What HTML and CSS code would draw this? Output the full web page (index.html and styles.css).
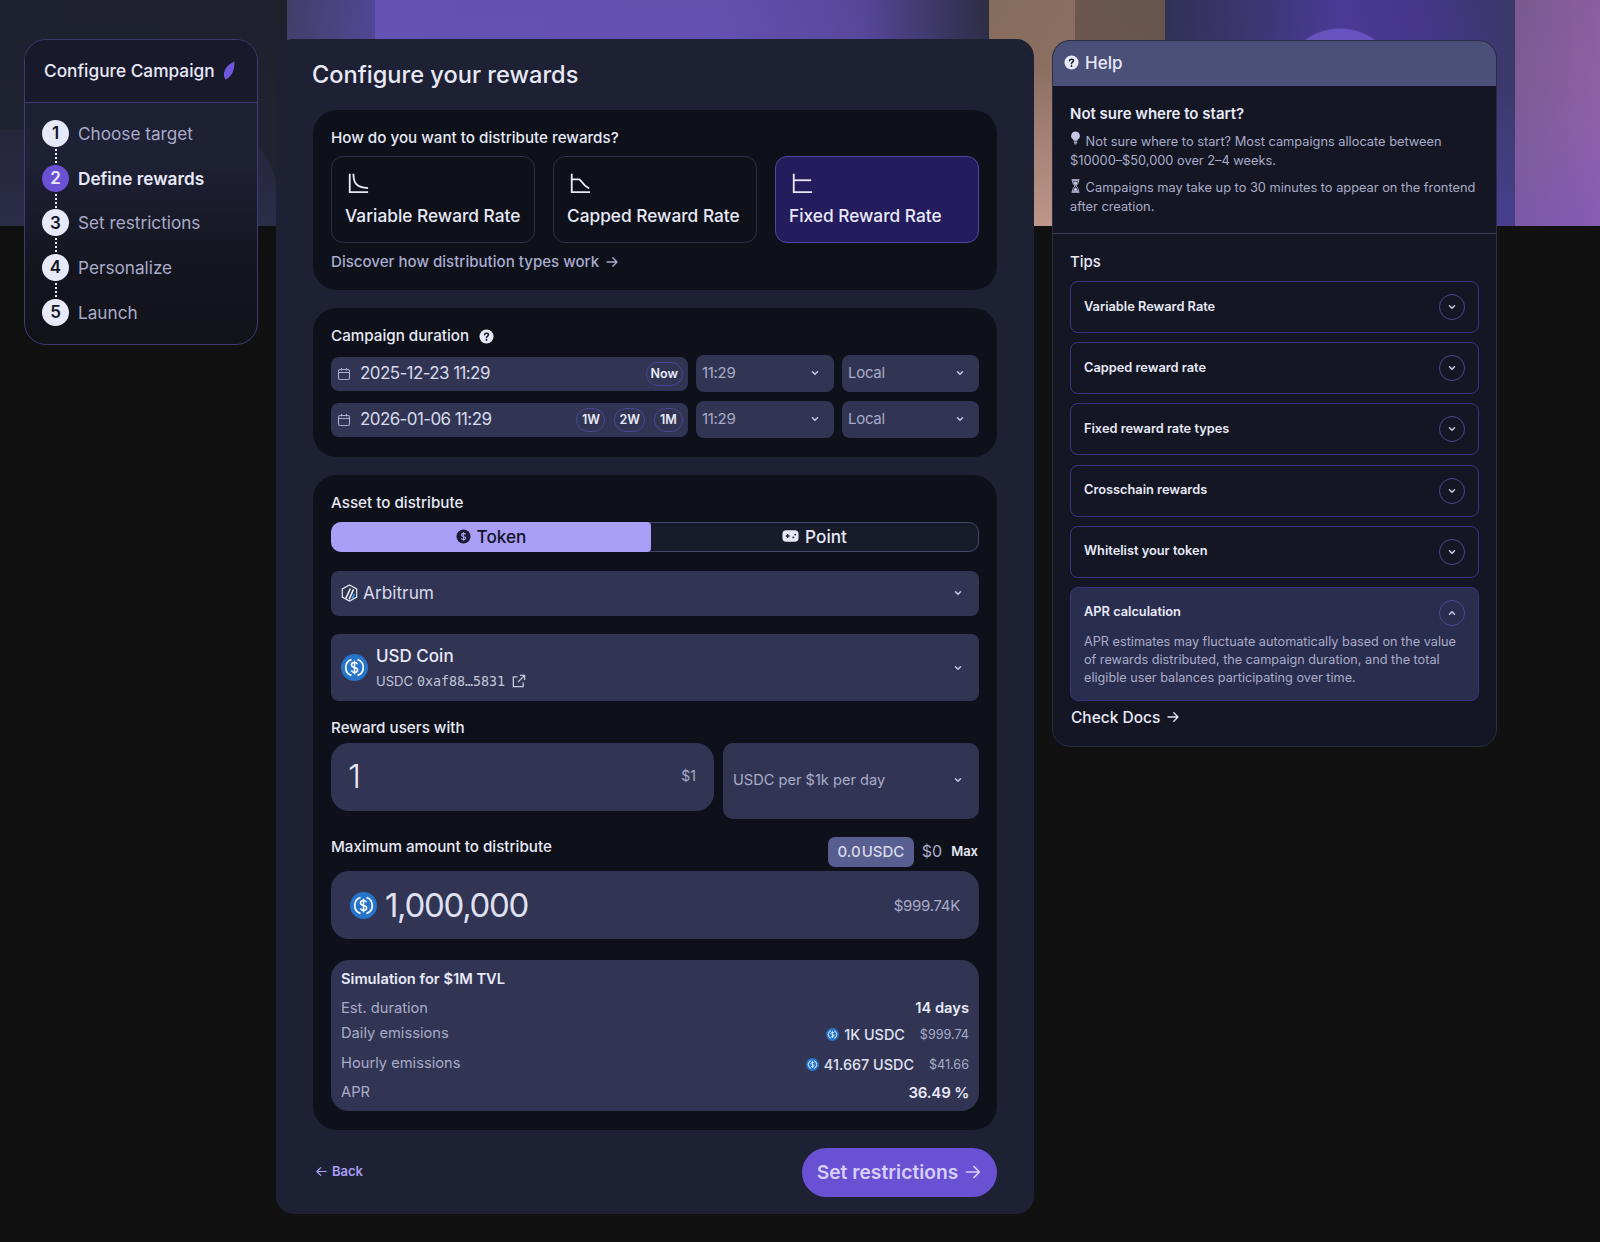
FILE: index.html
```html
<!DOCTYPE html>
<html lang="en">
<head>
  <meta charset="UTF-8">
  <meta name="viewport" content="width=device-width, initial-scale=1.0">
  <title>Configure Campaign</title>
  <link rel="stylesheet" href="styles.css">
</head>
<body>
  <svg class="icon-defs" aria-hidden="true">
    <symbol id="chev" viewBox="0 0 10 10"><path d="M2.5 3.8 5 6.3l2.5-2.5" fill="none" stroke="currentColor" stroke-width="1.5" stroke-linecap="round" stroke-linejoin="round"/></symbol>
    <symbol id="arrow" viewBox="0 0 14 14"><path d="M2 7h10M7.8 2.8 12 7l-4.200 4.200" fill="none" stroke="currentColor" stroke-width="1.3" stroke-linecap="round" stroke-linejoin="round"/></symbol>
    <symbol id="cal" viewBox="0 0 14 14"><g fill="none" stroke="currentColor" stroke-width="1.1"><rect x="1.5" y="2.5" width="11" height="10" rx="1.5"/><path d="M1.500 5.500h11M4.500 1v2.500M9.500 1v2.500"/></g></symbol>
    <symbol id="help" viewBox="0 0 16 16"><circle cx="8" cy="8" r="7.500" fill="currentColor"/><path d="M5.900 6.200C6 5 6.900 4.400 8 4.400c1.200 0 2.100.7 2.100 1.800 0 1.500-2.100 1.500-2.100 3.100" fill="none" stroke="#1a1d2e" stroke-width="1.600" stroke-linecap="round"/><circle cx="8" cy="11.700" r="1" fill="#1a1d2e"/></symbol>
    <symbol id="usdc" viewBox="0 0 32 32">
      <circle cx="16" cy="16" r="16" fill="#2775ca"/>
      <path d="M12.500 6.500a10 10 0 0 0 0 19M19.500 6.500a10 10 0 0 1 0 19" fill="none" stroke="#fff" stroke-width="2"/>
      <path d="M19.500 12.300c-.5-1.500-1.900-2.100-3.500-2.100-2 0-3.600 1-3.600 2.800 0 3.900 7.300 2.100 7.300 6 0 1.800-1.700 2.800-3.700 2.800-1.800 0-3.200-.8-3.700-2.300M16 8v16" fill="none" stroke="#fff" stroke-width="1.800"/>
    </symbol>
  </svg>

  <div class="hero"></div>

  <div class="page">
    <aside class="steps-card">
      <div class="steps-head">
        <span>Configure Campaign</span>
        <svg class="leaf" viewBox="0 0 12 18"><path d="M11.500.5C12 8 9.500 15 3 17.500-.5 12 3 4 11.500.5z" fill="#6f58de"/></svg>
      </div>
      <ol class="steps">
        <li class="step"><span class="step-num">1</span>Choose target</li>
        <li class="step active"><span class="step-num">2</span>Define rewards</li>
        <li class="step"><span class="step-num">3</span>Set restrictions</li>
        <li class="step"><span class="step-num">4</span>Personalize</li>
        <li class="step"><span class="step-num">5</span>Launch</li>
      </ol>
    </aside>

    <main class="main-panel">
      <h1>Configure your rewards</h1>

      <section class="card card-dist">
        <div class="label">How do you want to distribute rewards?</div>
        <div class="options">
          <div class="option">
            <svg class="curve" viewBox="0 0 24 24"><path d="M3 2v20h20" fill="none" stroke="currentColor" stroke-width="2"/><path d="M7 2c0 10 3 15 16 15.500" fill="none" stroke="currentColor" stroke-width="2"/></svg>
            <span>Variable Reward Rate</span>
          </div>
          <div class="option">
            <svg class="curve" viewBox="0 0 24 24"><path d="M3 2v20h20" fill="none" stroke="currentColor" stroke-width="2"/><path d="M3 8h8c2 0 3 6 11 10" fill="none" stroke="currentColor" stroke-width="2"/></svg>
            <span>Capped Reward Rate</span>
          </div>
          <div class="option selected">
            <svg class="curve" viewBox="0 0 24 24"><path d="M3 2v20h20" fill="none" stroke="currentColor" stroke-width="2"/><path d="M3 9h19" fill="none" stroke="currentColor" stroke-width="2"/></svg>
            <span>Fixed Reward Rate</span>
          </div>
        </div>
        <div class="discover">Discover how distribution types work <svg class="arrow-sm"><use href="#arrow"/></svg></div>
      </section>

      <section class="card card-duration">
        <div class="label label-help">Campaign duration <svg class="help-sm"><use href="#help"/></svg></div>
        <div class="date-row">
          <div class="date-field">
            <svg class="cal"><use href="#cal"/></svg>
            <span class="date-text">2025-12-23 11:29</span>
            <span class="pill">Now</span>
          </div>
          <div class="select small">11:29 <svg class="chev"><use href="#chev"/></svg></div>
          <div class="select small">Local <svg class="chev"><use href="#chev"/></svg></div>
        </div>
        <div class="date-row">
          <div class="date-field">
            <svg class="cal"><use href="#cal"/></svg>
            <span class="date-text">2026-01-06 11:29</span>
            <span class="pill">1W</span>
            <span class="pill">2W</span>
            <span class="pill">1M</span>
          </div>
          <div class="select small">11:29 <svg class="chev"><use href="#chev"/></svg></div>
          <div class="select small">Local <svg class="chev"><use href="#chev"/></svg></div>
        </div>
      </section>

      <section class="card card-asset">
        <div class="label">Asset to distribute</div>
        <div class="toggle">
          <div class="toggle-item on">
            <svg class="toggle-icon" viewBox="0 0 16 16"><circle cx="8" cy="8" r="7.500" fill="#1a1a33"/><path d="M10.200 5.800C9.900 5 9 4.700 8 4.700c-1.200 0-2.200.6-2.200 1.600 0 2.200 4.500 1.100 4.500 3.300 0 1-1 1.700-2.300 1.700-1.100 0-2-.5-2.300-1.300M8 3.500v9" fill="none" stroke="#a99ff7" stroke-width="1.200"/></svg>
            Token
          </div>
          <div class="toggle-item">
            <svg class="toggle-icon wide" viewBox="0 0 18 14"><rect x=".5" y="1" width="17" height="12" rx="4" fill="#e8e9f8"/><path d="M4 7h4M6 5v4" stroke="#1a1d2e" stroke-width="1.400"/><circle cx="12" cy="8.500" r="1" fill="#1a1d2e"/><circle cx="14" cy="5.500" r="1" fill="#1a1d2e"/></svg>
            Point
          </div>
        </div>
        <div class="select chain">
          <span class="chain-name">
            <svg class="arb" viewBox="0 0 18 20"><path d="M9 1 17 5.500v9L9 19l-8-4.500v-9z" fill="#2d374b" stroke="#e8e9f8" stroke-width="1.300"/><path d="M5 16 10 5M8.500 17 13.500 6" stroke="#e8e9f8" stroke-width="1.800"/><path d="M12 16 14.500 11" stroke="#28a0f0" stroke-width="1.800"/></svg>
            Arbitrum
          </span>
          <svg class="chev"><use href="#chev"/></svg>
        </div>
        <div class="select token">
          <span class="token-info">
            <svg class="usdc-lg"><use href="#usdc"/></svg>
            <span>
              <span class="token-name">USD Coin</span>
              <span class="token-addr">USDC <code>0xaf88…5831</code>
                <svg class="ext" viewBox="0 0 16 16"><path d="M7 3H2.500v10.500H13V9M9.500 1.500h5v5M14.500 1.500 7.500 8.500" fill="none" stroke="currentColor" stroke-width="1.400"/></svg>
              </span>
            </span>
          </span>
          <svg class="chev"><use href="#chev"/></svg>
        </div>

        <div class="label label-reward">Reward users with</div>
        <div class="reward-row">
          <div class="reward-input"><span class="reward-val">1</span><span class="reward-usd">$1</span></div>
          <div class="select reward-unit">USDC per $1k per day <svg class="chev"><use href="#chev"/></svg></div>
        </div>

        <div class="max-row">
          <div class="label">Maximum amount to distribute</div>
          <div class="balance">
            <span class="balance-badge">0.0 USDC</span>
            <span class="balance-usd">$0</span>
            <span class="balance-max">Max</span>
          </div>
        </div>
        <div class="amount">
          <div class="amount-left"><svg class="usdc-lg"><use href="#usdc"/></svg><span class="amount-val">1,000,000</span></div>
          <span class="amount-usd">$999.74K</span>
        </div>

        <div class="sim">
          <div class="sim-title">Simulation for $1M TVL</div>
          <div class="sim-row"><span>Est. duration</span><strong>14 days</strong></div>
          <div class="sim-row sim-tall">
            <span>Daily emissions</span>
            <span class="sim-val"><svg class="usdc-sm"><use href="#usdc"/></svg><b>1K USDC</b><em>$999.74</em></span>
          </div>
          <div class="sim-row sim-tall">
            <span>Hourly emissions</span>
            <span class="sim-val"><svg class="usdc-sm"><use href="#usdc"/></svg><b>41.667 USDC</b><em>$41.66</em></span>
          </div>
          <div class="sim-row"><span>APR</span><strong class="apr">36.49 %</strong></div>
        </div>
      </section>

      <footer class="form-foot">
        <div class="back"><svg class="arrow-back"><use href="#arrow"/></svg>Back</div>
        <div class="next">Set restrictions <svg class="arrow-next"><use href="#arrow"/></svg></div>
      </footer>
    </main>

    <aside class="help">
      <div class="help-head"><svg class="help-lg"><use href="#help"/></svg>Help</div>
      <div class="help-intro">
        <h3>Not sure where to start?</h3>
        <p><svg class="note-icon bulb" viewBox="0 0 12 16"><path d="M6 .5a5 5 0 0 1 3 9c-.6.5-.8 1-.9 1.500H3.900c-.1-.5-.3-1-.9-1.500a5 5 0 0 1 3-9z" fill="currentColor"/><rect x="4" y="12" width="4" height="1.400" fill="currentColor"/><rect x="4.700" y="14" width="2.600" height="1.200" fill="currentColor"/></svg> Not sure where to start? Most campaigns allocate between $10000–$50,000 over 2–4 weeks.</p>
        <p><svg class="note-icon" viewBox="0 0 12 16"><path d="M1.500 1h9M1.500 15h9" stroke="currentColor" stroke-width="1.600"/><path d="M2.500 2h7c0 3-1.500 4.500-3 6 1.500 1.500 3 3 3 6h-7c0-3 1.500-4.500 3-6-1.500-1.500-3-3-3-6z" fill="none" stroke="currentColor"/><path d="M3.500 3h5C8.300 5 7 6.500 6 7.500 5 6.500 3.700 5 3.500 3zM3.500 13.500C3.800 12 5 10.500 6 9.500c1 1 2.200 2.500 2.500 4z" fill="currentColor"/></svg> Campaigns may take up to 30 minutes to appear on the frontend after creation.</p>
      </div>
      <div class="help-tips">
        <h4>Tips</h4>
        <div class="tip"><div class="tip-head">Variable Reward Rate<span class="tip-btn"><svg class="chev"><use href="#chev"/></svg></span></div></div>
        <div class="tip"><div class="tip-head">Capped reward rate<span class="tip-btn"><svg class="chev"><use href="#chev"/></svg></span></div></div>
        <div class="tip"><div class="tip-head">Fixed reward rate types<span class="tip-btn"><svg class="chev"><use href="#chev"/></svg></span></div></div>
        <div class="tip"><div class="tip-head">Crosschain rewards<span class="tip-btn"><svg class="chev"><use href="#chev"/></svg></span></div></div>
        <div class="tip"><div class="tip-head">Whitelist your token<span class="tip-btn"><svg class="chev"><use href="#chev"/></svg></span></div></div>
        <div class="tip open">
          <div class="tip-head">APR calculation<span class="tip-btn"><svg class="chev up"><use href="#chev"/></svg></span></div>
          <p>APR estimates may fluctuate automatically based on the value of rewards distributed, the campaign duration, and the total eligible user balances participating over time.</p>
        </div>
        <div class="docs">Check Docs <svg class="arrow-docs"><use href="#arrow"/></svg></div>
      </div>
    </aside>
  </div>
</body>
</html>
```
FILE: styles.css
```css
* {
  box-sizing: border-box;
}

body {
  margin: 0;
  position: relative;
  background: #111111;
  color: #e8e9f8;
  font-family: Inter, "Noto Sans", sans-serif;
  overflow: hidden;
}

.icon-defs {
  position: absolute;
  width: 0;
  height: 0;
}

svg {
  display: block;
  flex-shrink: 0;
}

/* blurred banner behind the top of the page */
.hero {
  position: absolute;
  top: 0;
  left: 0;
  width: 100%;
  height: 226px;
  background:
    radial-gradient(circle 60px at 1340px 88px, #6753bd 98%, transparent 100%),
    linear-gradient(180deg, rgba(0, 0, 0, 0.04) 0, transparent 60%),
    linear-gradient(90deg,
      #1f2230 0, #20232f 287px,
      #45406c 287px, #55499a 375px,
      #6755b8 375px, #6653b6 720px, #5a4aa0 860px, #38345a 960px, #2e2f47 989px,
      #8a7060 989px, #8f7265 1075px,
      #6f5a50 1075px, #6b574f 1165px,
      #333357 1165px, #3f3878 1260px, #4c3c9c 1340px, #47388f 1420px, #3c3a6c 1515px,
      #7f5c94 1515px, #8f62a8 1600px);
}

.hero::before {
  content: "";
  position: absolute;
  left: 0;
  bottom: 0;
  width: 276px;
  height: 96px;
  border-radius: 0 60px 0 0;
  background: linear-gradient(180deg, #25263b, #2b2c47);
}

.hero::after {
  content: "";
  position: absolute;
  inset: 0;
  background:
    linear-gradient(180deg, transparent 35%, rgba(120, 80, 200, 0.35) 100%) 1515px 0 / 85px 100% no-repeat,
    linear-gradient(180deg, transparent 40%, rgba(90, 70, 190, 0.4) 100%) 1420px 0 / 95px 100% no-repeat,
    linear-gradient(180deg, transparent 30%, rgba(230, 180, 170, 0.55) 100%) 989px 0 / 63px 100% no-repeat;
}

.page {
  position: relative;
  display: grid;
  grid-template-columns: 234px 758px 445px;
  gap: 18px;
  align-items: start;
  padding: 39px 0 28px 24px;
}

/* steps */
.steps-card {
  height: 306px;
  border: 1px solid #3d3a74;
  border-radius: 22px;
  background: linear-gradient(180deg, #1c1e30 0, #1e2034 40%, #15151f 75%, #121219 100%);
  overflow: hidden;
}

.steps-head {
  display: flex;
  align-items: center;
  gap: 7px;
  height: 63px;
  padding: 0 0 2px 19px;
  border-bottom: 1px solid #3d3a74;
  background: #181a2b;
  font-size: 17.3px;
  font-weight: 500;
}

.leaf {
  width: 13px;
  height: 19px;
}

.steps {
  list-style: none;
  margin: 0;
  padding: 8px 0 0 17px;
}

.step {
  position: relative;
  display: flex;
  align-items: center;
  gap: 9px;
  height: 44.7px;
  color: #a9abc9;
  font-size: 17.2px;
}

.step-num {
  position: relative;
  z-index: 1;
  display: flex;
  align-items: center;
  justify-content: center;
  width: 27px;
  height: 27px;
  border-radius: 50%;
  background: #e8e9f8;
  color: #14151f;
  font-size: 17px;
  font-weight: 600;
}

.step:not(:last-child)::after {
  content: "";
  position: absolute;
  left: 12.5px;
  top: 30px;
  height: 30px;
  border-left: 2px dotted #e8e9f8;
}

.step.active {
  color: #e8e9f8;
  font-weight: 600;
}

.step.active .step-num {
  background: #6a50d3;
  color: #e8e9f8;
}

/* main panel */
.main-panel {
  height: 1175px;
  padding: 20px 37px 17px;
  border-radius: 18px;
  background: #1e2133;
}

h1 {
  margin: 0 0 19px -1px;
  font-size: 23.6px;
  line-height: 32px;
  font-weight: 500;
}

.card {
  margin-bottom: 18px;
  padding: 18px 18px 19px;
  border-radius: 24px;
  background: #0e1119;
}

.label {
  font-size: 15.2px;
  line-height: 20px;
  font-weight: 500;
}

.options {
  display: grid;
  grid-template-columns: repeat(3, 1fr);
  gap: 18px;
  margin-top: 8px;
}

.option {
  height: 87px;
  padding: 15px 13px;
  border: 1px solid #2c2f45;
  border-radius: 12px;
  font-size: 17.3px;
  font-weight: 500;
  white-space: nowrap;
}

.option.selected {
  border-color: #4f48a0;
  background: #241c5c;
}

.curve {
  width: 22px;
  height: 22px;
  margin: 0 0 11px 2px;
}

.discover {
  display: flex;
  align-items: center;
  gap: 6px;
  margin-top: 10px;
  color: #a9abd0;
  font-size: 15.1px;
  line-height: 18px;
  font-weight: 500;
}

.arrow-sm {
  width: 14px;
  height: 14px;
}

.label-help {
  display: flex;
  align-items: center;
  gap: 10px;
  margin-bottom: 9px;
}

.help-sm {
  width: 15px;
  height: 15px;
  color: #e8e9f8;
}

.date-row {
  display: grid;
  grid-template-columns: 357px 138px 137px;
  gap: 8px;
  align-items: center;
  margin-bottom: 9px;
}

.date-row:last-child {
  margin-bottom: 0;
}

.date-field {
  display: flex;
  align-items: center;
  gap: 6px;
  height: 34px;
  padding: 0 5px 0 6px;
  border-radius: 8px;
  background: #313553;
}

.cal {
  width: 14px;
  height: 14px;
  color: #a9abc9;
}

.date-text {
  margin: -2px auto 0 3px;
  font-size: 17px;
  letter-spacing: -0.6px;
  color: #d8d9ec;
}

.pill {
  display: flex;
  align-items: center;
  justify-content: center;
  min-width: 29px;
  height: 24px;
  padding: 0 4px;
  border: 1px solid #4b4796;
  border-radius: 14px;
  font-size: 12.5px;
  font-weight: 600;
}

.pill + .pill {
  margin-left: 3px;
}

.select {
  display: flex;
  align-items: center;
  justify-content: space-between;
  border-radius: 8px;
  background: #313553;
  color: #a9abc9;
}

.select.small {
  height: 37px;
  padding: 0 14px 2px 6px;
  font-size: 15px;
  letter-spacing: -0.3px;
}

.chev {
  width: 10px;
  height: 10px;
  color: #c9cbe0;
}

.chev.up {
  transform: rotate(180deg);
}

.toggle {
  display: grid;
  grid-template-columns: 319px 1fr;
  height: 30px;
  margin-top: 9px;
  border: 1px solid #44476a;
  border-radius: 10px;
  background: #181b2a;
}

.toggle-item {
  display: flex;
  align-items: center;
  justify-content: center;
  gap: 6px;
  padding-bottom: 2px;
  font-size: 17.2px;
  font-weight: 500;
}

.toggle-item.on {
  margin: -1px 0 -1px -1px;
  border-radius: 10px 4px 4px 10px;
  background: #a99ff7;
  color: #14142a;
}

.toggle-icon {
  width: 15px;
  height: 15px;
}

.toggle-icon.wide {
  width: 17px;
  height: 14px;
}

.chain {
  height: 45px;
  margin-top: 19px;
  padding: 0 16px 2px 10px;
  font-size: 17.3px;
}

.chain-name {
  display: flex;
  align-items: center;
  gap: 5px;
  color: #d8d9ec;
}

.arb {
  width: 17px;
  height: 18px;
}

.token {
  height: 67px;
  margin-top: 18px;
  padding: 0 16px 0 10px;
}

.token-info {
  display: flex;
  align-items: center;
  gap: 8px;
}

.usdc-lg {
  width: 27px;
  height: 27px;
}

.token-name {
  display: block;
  font-size: 17px;
  font-weight: 500;
  color: #e8e9f8;
}

.token-addr {
  display: flex;
  align-items: center;
  gap: 4px;
  margin-top: 7px;
  font-size: 13px;
  color: #c4c6dc;
}

.token-addr code {
  font-family: "DejaVu Sans Mono", monospace;
  font-size: 13.3px;
}

.ext {
  width: 15px;
  height: 15px;
  margin-left: 2px;
}

.label-reward {
  margin-top: 17px;
}

.reward-row {
  display: grid;
  grid-template-columns: 383px 1fr;
  gap: 9px;
  align-items: start;
  margin-top: 5px;
}

.reward-input {
  display: flex;
  align-items: center;
  justify-content: space-between;
  height: 68px;
  padding: 0 18px 2px 17px;
  border-radius: 18px;
  background: #313553;
}

.reward-val {
  font-size: 33px;
  font-weight: 300;
}

.reward-usd {
  margin-top: -2px;
  font-size: 14px;
  color: #a9abc9;
}

.reward-unit {
  height: 76px;
  padding: 0 16px 2px 10px;
  border-radius: 10px;
  font-size: 14.6px;
}

.max-row {
  display: flex;
  align-items: flex-start;
  justify-content: space-between;
  margin-top: 18px;
}

.balance {
  display: flex;
  align-items: center;
  gap: 9px;
  height: 30px;
  padding-right: 1px;
}

.balance-badge {
  display: flex;
  align-items: center;
  height: 30px;
  margin-right: -1px;
  padding: 0 9.5px 2px;
  border-radius: 7px;
  background: #585e8f;
  color: #d8d9ec;
  font-size: 15px;
  font-weight: 500;
  word-spacing: -3px;
}

.balance-usd {
  margin-bottom: 3px;
  color: #a9abc9;
  font-size: 16px;
}

.balance-max {
  margin-bottom: 3px;
  font-size: 13px;
  font-weight: 600;
}

.amount {
  display: flex;
  align-items: center;
  justify-content: space-between;
  height: 68px;
  margin-top: 4px;
  padding: 0 19px;
  border-radius: 18px;
  background: #313553;
}

.amount-left {
  display: flex;
  align-items: center;
  gap: 8px;
}

.amount-val {
  font-size: 33px;
  letter-spacing: -1.3px;
  color: #dfe0f2;
}

.amount-usd {
  font-size: 15px;
  letter-spacing: -0.3px;
  color: #a9abc9;
}

.sim {
  height: 151px;
  margin-top: 21px;
  padding: 10px 10px;
  border-radius: 18px;
  background: #313553;
  color: #a9abc9;
  font-size: 14.7px;
}

.sim-title {
  margin-bottom: 8px;
  color: #e8e9f8;
  font-weight: 600;
  line-height: 18px;
}

.sim-row {
  display: flex;
  align-items: center;
  justify-content: space-between;
  height: 24px;
}

.sim-tall {
  height: 30px;
}

.sim-tall > span:first-child {
  margin-top: -5px;
}

.sim-tall > .sim-val {
  margin-top: -2px;
}

.sim-row strong {
  color: #e8e9f8;
  font-weight: 600;
}

.sim-row .apr {
  font-size: 15px;
  letter-spacing: -0.2px;
}

.sim-val {
  display: flex;
  align-items: center;
  gap: 5px;
}

.sim-val b {
  color: #dfe0f2;
  font-size: 14.4px;
  font-weight: 500;
}

.sim-val em {
  margin-left: 10px;
  font-style: normal;
  font-size: 12.6px;
}

.usdc-sm {
  width: 13px;
  height: 13px;
}

.form-foot {
  display: flex;
  align-items: center;
  justify-content: space-between;
}

.back {
  display: flex;
  align-items: center;
  gap: 4px;
  padding: 0 0 3px 2px;
  color: #a99ff7;
  font-size: 13px;
  font-weight: 600;
}

.arrow-back {
  width: 13px;
  height: 13px;
  transform: rotate(180deg);
}

.next {
  display: flex;
  align-items: center;
  justify-content: center;
  gap: 6px;
  width: 195px;
  height: 49px;
  padding-bottom: 2px;
  border-radius: 25px;
  background: #6a50d3;
  color: #d5cffb;
  font-size: 19.3px;
  font-weight: 600;
}

.arrow-next {
  width: 18px;
  height: 18px;
}

/* help */
.help {
  height: 707px;
  margin-top: 1px;
  border: 1px solid #2b2d42;
  border-radius: 18px;
  background: #141723;
  overflow: hidden;
}

.help-head {
  display: flex;
  align-items: center;
  gap: 6px;
  height: 45px;
  padding: 0 11px 2px;
  background: #4a5078;
  font-size: 17px;
  font-weight: 500;
}

.help-lg {
  width: 15px;
  height: 15px;
  color: #e8e9f8;
}

.help-intro {
  height: 148px;
  padding: 18px 17px 0;
  border-bottom: 1px solid #3a3c52;
}

.help-intro h3 {
  margin: 0 0 7px;
  font-size: 15px;
  line-height: 20px;
  font-weight: 600;
}

.help-intro p {
  margin: 0 0 8px;
  color: #a9abc9;
  font-size: 12.8px;
  line-height: 19px;
}

.note-icon {
  display: inline-block;
  width: 11px;
  height: 14px;
  margin-right: 1px;
  color: #c4c6e8;
  vertical-align: -1px;
}

.note-icon.bulb {
  vertical-align: 1px;
}

.help-tips {
  padding: 18px 17px 0;
}

.help-tips h4 {
  margin: 0 0 9px;
  font-size: 15px;
  line-height: 20px;
  font-weight: 500;
}

.tip {
  min-height: 52px;
  margin-bottom: 9.2px;
  padding: 0 13px;
  border: 1px solid #3a3580;
  border-radius: 8px;
}

.tip-head {
  display: flex;
  align-items: center;
  justify-content: space-between;
  height: 50px;
  padding-bottom: 2px;
  font-size: 12.8px;
  font-weight: 600;
}

.tip-btn {
  display: flex;
  align-items: center;
  justify-content: center;
  width: 26px;
  height: 26px;
  margin-bottom: -2px;
  border: 1px solid #4b4796;
  border-radius: 50%;
}

.tip.open {
  margin-bottom: 7px;
  padding-bottom: 13px;
  background: #2a2e4e;
}

.tip.open p {
  margin: -5px 0 0;
  color: #a9abc9;
  font-size: 12.7px;
  line-height: 18px;
}

.docs {
  display: flex;
  align-items: center;
  gap: 6px;
  padding-left: 1px;
  font-size: 15.5px;
  font-weight: 500;
}

.arrow-docs {
  width: 14px;
  height: 14px;
}
```
